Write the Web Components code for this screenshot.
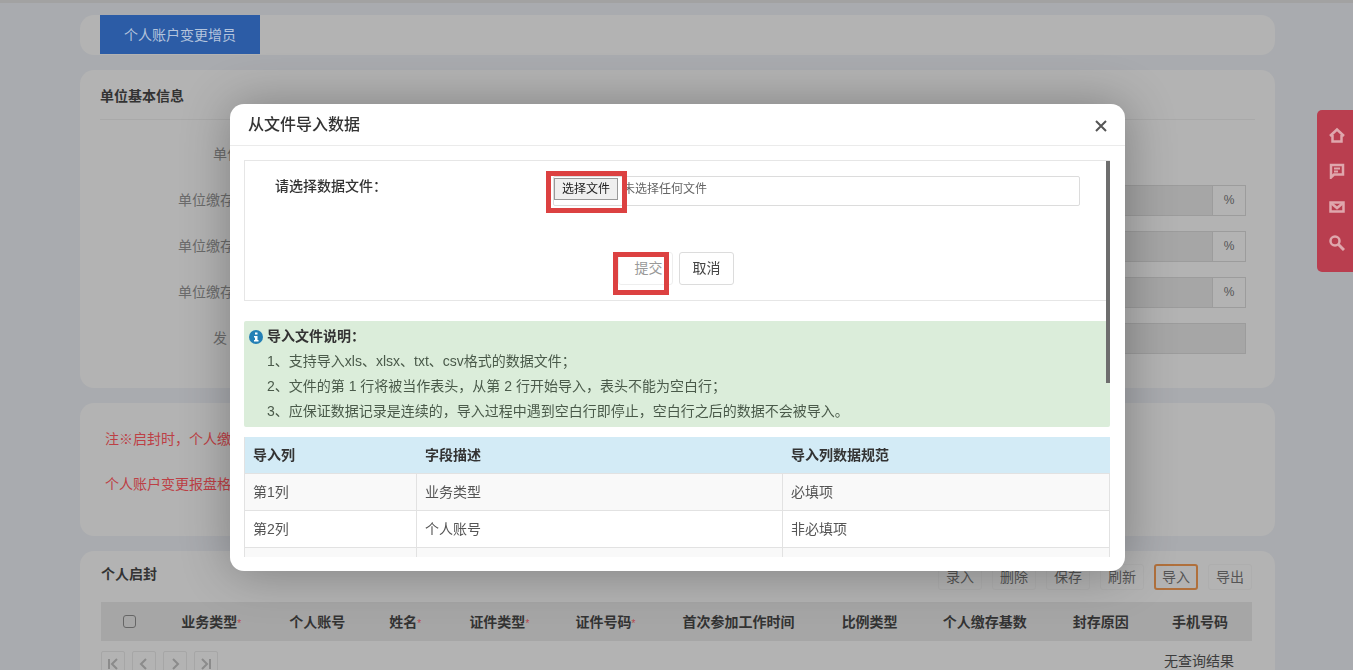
<!DOCTYPE html>
<html lang="zh-CN">
<head>
<meta charset="utf-8">
<title>个人账户变更增员</title>
<style>
  html, body { margin: 0; height: 100%; }
  body {
    overflow: hidden;
    background: #a9abaf;
    color: #444;
    font: 14px/20px "Liberation Sans", "Noto Sans CJK SC", sans-serif;
  }
</style>
</head>
<body>
<account-page></account-page>
<side-rail></side-rail>
<modal-dialog heading="从文件导入数据">
  <file-form></file-form>
  <import-help></import-help>
  <column-table></column-table>
</modal-dialog>

<script>
const define = (name, html, setup) => {
  const template = document.createElement('template');
  template.innerHTML = html;
  customElements.define(name, class extends HTMLElement {
    constructor() {
      super();
      this.attachShadow({ mode: 'open' }).append(template.content.cloneNode(true));
    }
    connectedCallback() { if (setup) setup(this, this.shadowRoot); }
  });
};

define('page-card', `
  <style>
    :host { display: block; flex: none; box-sizing: border-box; background: #b3b3b3; border-radius: 14px; padding: 0 20px; }
  </style>
  <slot></slot>`);

define('rate-row', `
  <style>
    :host { display: grid; grid-template-columns: 1fr 345px; align-items: center; height: 46px; padding: 0 9px 0 78px; }
    :host([short]) { padding-left: 113px; }
    label { color: #6b6b6b; }
    .group { display: flex; height: 31px; box-sizing: border-box; border: 1px solid #9c9c9c; }
    input { flex: 1; min-width: 0; border: 0; padding: 0 8px; background: #a6a6a6; font: inherit; }
    .unit { width: 32px; line-height: 29px; text-align: center; font-size: 12px; color: #555; border-left: 1px solid #9c9c9c; }
  </style>
  <label for="value"><slot></slot></label>
  <div class="group"><input id="value" type="text" readonly><span class="unit">%</span></div>`,
  (host, root) => {
    if (host.hasAttribute('plain')) root.querySelector('.unit').remove();
    if (host.hasAttribute('bare')) root.querySelector('.group').remove();
  });

define('tool-button', `
  <style>
    :host { display: block; }
    button {
      width: 44px; height: 26px; box-sizing: border-box; padding: 0; border: 1px solid #aeaeae; border-radius: 3px;
      background: transparent; color: #555; font: inherit; line-height: 20px;
    }
    :host([active]) button { border: 2px solid #b0703c; }
  </style>
  <button type="button"><slot></slot></button>`);

define('record-table', `
  <style>
    :host { display: block; }
    table { width: 100%; table-layout: fixed; border-collapse: collapse; }
    th { height: 39px; padding: 0; background: #a6a6a6; color: #333; font-weight: 700; white-space: nowrap; }
    input { appearance: none; display: block; width: 13px; height: 13px; margin: 0 auto; border: 1px solid #666; border-radius: 3px; }
    i { color: #b5494f; font-size: 10px; line-height: 10px; font-style: normal; font-weight: 400; }
    .foot { display: flex; justify-content: space-between; align-items: flex-start; padding: 10px 18px 0 0; }
    nav { display: flex; gap: 7px; }
    button { width: 24px; height: 26px; padding: 0; border: 1px solid #a6a6a6; border-radius: 2px; background: transparent; }
    svg { display: block; width: 12px; height: 12px; margin: auto; fill: none; stroke: #8b8b8b; stroke-width: 2; }
    .empty { color: #3c3c3c; line-height: 20px; }
  </style>
  <table>
    <colgroup>
      <col style="width:56px"><col style="width:108px"><col style="width:104px"><col style="width:72px">
      <col style="width:116px"><col style="width:96px"><col style="width:170px"><col style="width:92px">
      <col style="width:138px"><col style="width:94px"><col style="width:104px">
    </colgroup>
    <thead><tr>
      <th><input type="checkbox" aria-label="全选"></th>
      <th>业务类型<i>*</i></th><th>个人账号</th><th>姓名<i>*</i></th><th>证件类型<i>*</i></th><th>证件号码<i>*</i></th>
      <th>首次参加工作时间</th><th>比例类型</th><th>个人缴存基数</th><th>封存原因</th><th>手机号码</th>
    </tr></thead>
  </table>
  <div class="foot">
    <nav aria-label="分页">
      <button type="button" aria-label="首页"><svg viewBox="0 0 12 12"><path d="M2 1v10M10 1 5 6l5 5"/></svg></button>
      <button type="button" aria-label="上一页"><svg viewBox="0 0 12 12"><path d="M8 1 3 6l5 5"/></svg></button>
      <button type="button" aria-label="下一页"><svg viewBox="0 0 12 12"><path d="m4 1 5 5-5 5"/></svg></button>
      <button type="button" aria-label="末页"><svg viewBox="0 0 12 12"><path d="M10 1v10M2 1l5 5-5 5"/></svg></button>
    </nav>
    <span class="empty">无查询结果</span>
  </div>`);

define('account-page', `
  <style>
    :host {
      display: flex; flex-direction: column; gap: 15px; height: 100vh; box-sizing: border-box; overflow: hidden;
      padding: 12px 78px 0 80px; border-top: 3px solid #a2a2a2;
    }
    .tab { display: block; height: 39px; padding: 0 24px; border: 0; background: #2c5ca6; color: #b4c4dd; font: inherit; }
    .tabs { height: 40px; }
    h2 { margin: 0; font-size: 14px; line-height: 20px; font-weight: 700; color: #333; }
    .basic { padding-bottom: 27px; }
    .basic h2 { padding: 16px 0 13px; margin-bottom: 11px; border-bottom: 1px solid #a9a9a9; }
    .notes { padding: 14px 25px 29px; color: #bd3f45; }
    .notes p { margin: 0; line-height: 45px; }
    .records { padding: 13px 23px 0 21px; border-radius: 14px 14px 0 0; flex: 1; min-height: 0; overflow: hidden; }
    .bar { display: flex; justify-content: space-between; align-items: flex-start; margin-bottom: 12px; }
    .tools { display: flex; gap: 10px; }
  </style>
  <page-card class="tabs"><button class="tab" type="button">个人账户变更增员</button></page-card>
  <page-card class="basic">
    <h2>单位基本信息</h2>
    <rate-row short bare>单位</rate-row>
    <rate-row>单位缴存</rate-row>
    <rate-row>单位缴存</rate-row>
    <rate-row>单位缴存</rate-row>
    <rate-row short plain>发</rate-row>
  </page-card>
  <page-card class="notes">
    <p>注※启封时，个人缴</p>
    <p>个人账户变更报盘格</p>
  </page-card>
  <page-card class="records">
    <div class="bar">
      <h2>个人启封</h2>
      <div class="tools">
        <tool-button>录入</tool-button><tool-button>删除</tool-button><tool-button>保存</tool-button>
        <tool-button>刷新</tool-button><tool-button active>导入</tool-button><tool-button>导出</tool-button>
      </div>
    </div>
    <record-table></record-table>
  </page-card>`);

define('side-rail', `
  <style>
    :host {
      position: fixed; top: 110px; right: 0; width: 36px; height: 162px; box-sizing: border-box; padding: 17px 0 0 12px;
      display: flex; flex-direction: column; gap: 20px; background: #b93e4f; border-radius: 5px 0 0 5px;
    }
    a { display: block; height: 16px; color: #dfa7ad; }
    svg { display: block; width: 16px; height: 16px; fill: none; stroke: currentColor; stroke-width: 2; }
  </style>
  <a href="#home" aria-label="首页"><svg viewBox="0 0 16 16"><path d="M1 9 8 2.500 15 9M3.500 8v6.500h9V8" stroke-width="2.500"/></svg></a>
  <a href="#message" aria-label="留言"><svg viewBox="0 0 16 16"><path d="M2 14.500V2h12v9.500H5z" stroke-width="2.500"/><path d="M5 5.500h6M5 8.500h4"/></svg></a>
  <a href="#mail" aria-label="邮件"><svg viewBox="0 0 16 16"><path d="M1.500 3.500h13v9h-13z" stroke-width="2.500"/><path d="m2 4 6 5 6-5" stroke-width="2.500"/></svg></a>
  <a href="#search" aria-label="搜索"><svg viewBox="0 0 16 16"><circle cx="6" cy="6" r="4.500" stroke-width="2.500"/><path d="m9.500 9.500 5.500 5.500" stroke-width="3"/></svg></a>`);

define('modal-dialog', `
  <style>
    :host { position: fixed; inset: 0; padding: 104px 228px 0 230px; }
    section { background: #fff; border-radius: 14px; padding-bottom: 14px; box-shadow: 1px 1px 50px rgba(0,0,0,.3); }
    header { display: flex; justify-content: space-between; align-items: center; height: 41px; padding: 0 18px; border-bottom: 1px solid #ebebeb; }
    h1 { margin: 0; font-size: 16px; line-height: 24px; font-weight: 500; color: #333; }
    header button { padding: 2px 0 0; border: 0; background: none; }
    svg { display: block; width: 12px; height: 12px; stroke: #555; stroke-width: 2; }
    .frame { position: relative; margin: 14px 15px 0 14px; }
    .scroll { max-height: 397px; overflow: hidden; }
    .thumb { position: absolute; top: 1px; right: 0; width: 4px; height: 56%; background: #6e6e6e; }
  </style>
  <section role="dialog" aria-labelledby="title">
    <header><h1 id="title"></h1>
      <button type="button" aria-label="关闭"><svg viewBox="0 0 12 12"><path d="m1 1 10 10M11 1 1 11"/></svg></button>
    </header>
    <div class="frame"><div class="scroll"><slot></slot></div><div class="thumb"></div></div>
  </section>`,
  (host, root) => { root.querySelector('h1').textContent = host.getAttribute('heading'); });

define('file-form', `
  <style>
    :host { display: block; border: 1px solid #e6e6e6; padding: 15px 29px 15px 30px; }
    .row { display: grid; grid-template-columns: 278px 1fr; align-items: start; }
    .row > label { color: #333; font-weight: 500; }
    .picker { position: relative; display: flex; align-items: center; gap: 5px; height: 30px; box-sizing: border-box; padding-bottom: 4px; border: 1px solid #dcdcdc; border-radius: 2px; font-size: 12px; color: #666; }
    .picker button { width: 64px; height: 22px; padding: 0; border: 1px solid #999; background: #efefef; color: #222; font: inherit; line-height: 18px; }
    input { display: none; }
    .actions { display: flex; justify-content: center; gap: 6px; padding: 46px 3px 0 0; }
    .actions > span { position: relative; }
    .actions button { display: block; width: 55px; height: 33px; padding: 0 0 2px; border: 1px solid #dcdcdc; border-radius: 3px; background: #fff; color: #444; font: inherit; }
    .actions button:disabled { color: #999; border-color: #eee; padding-left: 6px; }
    .mark { position: absolute; box-sizing: border-box; border: 5px solid #dc4141; pointer-events: none; }
    .mark.file { left: -8px; top: -6px; width: 81px; height: 42px; }
    .mark.send { left: -5px; top: 0; width: 56px; height: 43px; }
  </style>
  <form>
    <div class="row">
      <label for="file">请选择数据文件：</label>
      <div class="picker">
        <button type="button">选择文件</button><span>未选择任何文件</span>
        <input id="file" type="file" accept=".xls,.xlsx,.txt,.csv">
        <div class="mark file"></div>
      </div>
    </div>
    <div class="actions">
      <span><button type="submit" disabled>提交</button><div class="mark send"></div></span>
      <button type="button">取消</button>
    </div>
  </form>`,
  (host, root) => {
    root.querySelector('.picker button').onclick = () => root.querySelector('#file').click();
  });

define('import-help', `
  <style>
    :host { display: block; margin: 20px 0 10px; padding: 3px 5px; background: #dbedda; border-radius: 2px; color: #4a5a4a; }
    h3 { display: flex; align-items: center; gap: 4px; margin: 0; font-size: 14px; line-height: 25px; font-weight: 700; color: #333; }
    svg { width: 14px; height: 14px; }
    p { margin: 0; padding-left: 18px; line-height: 25px; }
  </style>
  <h3><svg viewBox="0 0 14 14"><circle cx="7" cy="7" r="7" fill="#2480b5"/><path d="M6 2.500h2.500v2H6zM5 6h3.500v4H9.500v1.500H5V10h1V7.500H5z" fill="#fff"/></svg>导入文件说明：</h3>
  <p>1、支持导入xls、xlsx、txt、csv格式的数据文件；</p>
  <p>2、文件的第 1 行将被当作表头，从第 2 行开始导入，表头不能为空白行；</p>
  <p>3、应保证数据记录是连续的，导入过程中遇到空白行即停止，空白行之后的数据不会被导入。</p>`);

define('column-table', `
  <style>
    :host { display: block; }
    table { width: 100%; table-layout: fixed; border-collapse: separate; border-spacing: 0; border-left: 1px solid #e2e2e2; }
    th, td { box-sizing: border-box; height: 37px; padding: 0 8px; text-align: left; border-bottom: 1px solid #e2e2e2; }
    td { border-right: 1px solid #e2e2e2; color: #555; }
    th { background: #d3ebf6; color: #333; font-weight: 700; }
    tbody tr:nth-child(odd) { background: #f9f9f9; }
  </style>
  <table>
    <colgroup><col style="width:172px"><col style="width:366px"><col style="width:327px"></colgroup>
    <thead><tr><th>导入列</th><th>字段描述</th><th>导入列数据规范</th></tr></thead>
    <tbody>
      <tr><td>第1列</td><td>业务类型</td><td>必填项</td></tr>
      <tr><td>第2列</td><td>个人账号</td><td>非必填项</td></tr>
      <tr><td></td><td></td><td></td></tr>
    </tbody>
  </table>`);
</script>
</body>
</html>
